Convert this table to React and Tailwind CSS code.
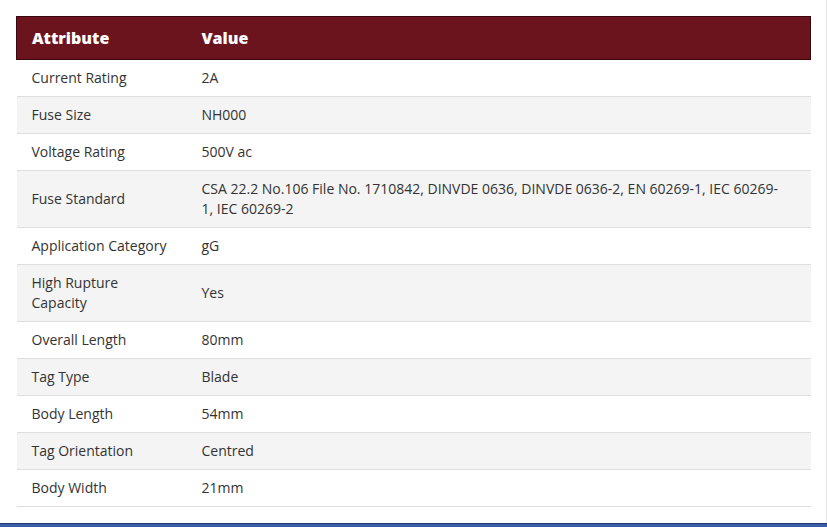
const rows = [
  ["Current Rating", "2A"],
  ["Fuse Size", "NH000"],
  ["Voltage Rating", "500V ac"],
  [
    "Fuse Standard",
    "CSA 22.2 No.106 File No. 1710842, DINVDE 0636, DINVDE 0636-2, EN 60269-1, IEC 60269-1, IEC 60269-2",
  ],
  ["Application Category", "gG"],
  ["High Rupture Capacity", "Yes"],
  ["Overall Length", "80mm"],
  ["Tag Type", "Blade"],
  ["Body Length", "54mm"],
  ["Tag Orientation", "Centred"],
  ["Body Width", "21mm"],
];

export default function App() {
  return (
    <div className="flex h-[527px] w-[827px] flex-col bg-white font-['Open_Sans',sans-serif]">
      <div className="flex flex-1 border-r border-[#e6e6e6]">
        <div className="flex-1 pl-4 pr-[15px] pt-4">
          <table className="w-full border-collapse text-[14px] text-[#333]">
            <thead>
              <tr className="border border-[#3a070c] bg-[#6b141e] text-white">
                <th className="w-[169px] py-[9px] pl-[15px] text-left text-[16px] font-extrabold leading-[24px]">
                  Attribute
                </th>
                <th className="py-[9px] pl-[16px] text-left text-[16px] font-extrabold leading-[24px]">
                  Value
                </th>
              </tr>
            </thead>
            <tbody>
              {rows.map(([k, v], i) => (
                <tr
                  key={k}
                  className={`border-b border-[#dedede] ${i % 2 === 1 ? "bg-[#f4f4f4]" : "bg-white"}`}
                >
                  <td className="w-[169px] py-[8px] pl-[15px] pr-4 align-middle leading-[20px]">{k}</td>
                  <td className="py-[8px] pl-4 pr-[28px] align-middle leading-[20px]">{v}</td>
                </tr>
              ))}
            </tbody>
          </table>
        </div>
      </div>
      <div className="h-[4px] border-t border-[#1f3a70] bg-[#3a5da6]" />
    </div>
  );
}
